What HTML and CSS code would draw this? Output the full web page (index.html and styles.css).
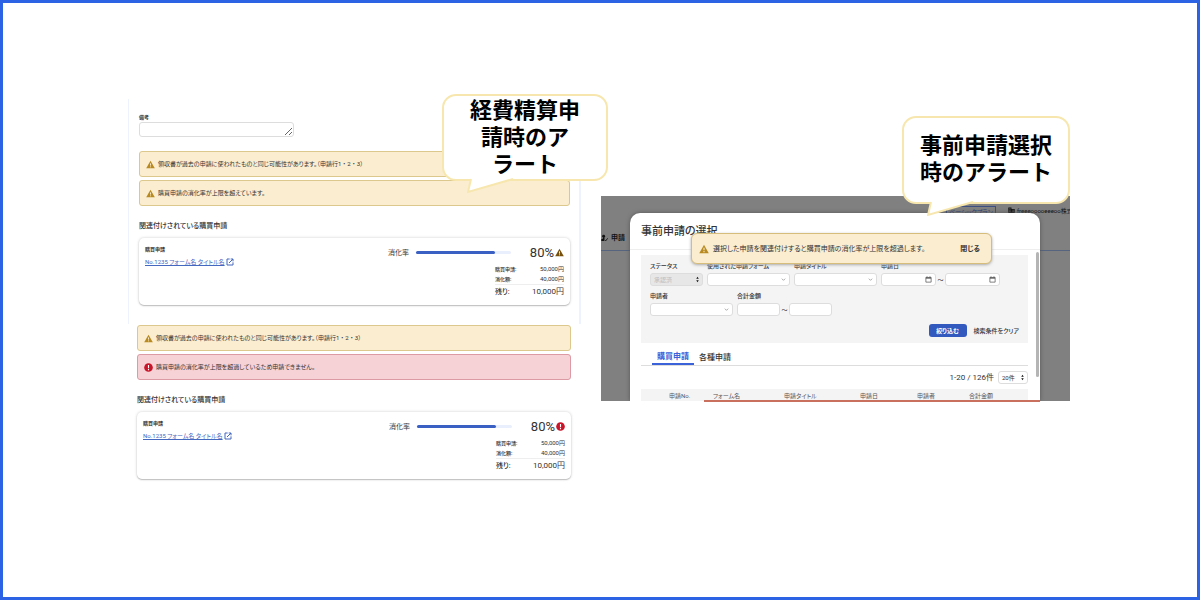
FILE: index.html
```
<!DOCTYPE html>
<html lang="ja">
<head>
<meta charset="utf-8">
<title>購買申請の消化率アラート</title>
<link rel="stylesheet" href="styles.css">
</head>
<body>
<svg class="defs" aria-hidden="true">
  <symbol id="warn" viewBox="0 0 24 24"><path d="M12 2 0.500 22h23z" fill="currentColor"/><path d="M12 9v6M12 17v2.500" stroke="var(--mark)" stroke-width="2.500"/></symbol>
  <symbol id="error" viewBox="0 0 24 24"><circle cx="12" cy="12" r="11.500" fill="currentColor"/><path d="M12 5v9M12 16v3" stroke="#fff" stroke-width="3"/></symbol>
  <symbol id="open" viewBox="0 0 24 24"><path d="M11 3H3v18h18v-8M14 3h7v7M21 3 9 15" fill="none" stroke="currentColor" stroke-width="3"/></symbol>
  <symbol id="down" viewBox="0 0 24 24"><path d="m4 8 8 8 8-8" fill="none" stroke="currentColor" stroke-width="3"/></symbol>
  <symbol id="updown" viewBox="0 0 12 24"><path d="M6 1 11 9H1zM6 23 1 15h10z" fill="currentColor"/></symbol>
  <symbol id="calendar" viewBox="0 0 24 24"><path d="M3 5h18v16H3zM7 1v4M17 1v4" fill="none" stroke="currentColor" stroke-width="2.500"/><path d="M3 5h18v4H3z" fill="currentColor"/></symbol>
  <symbol id="stamp" viewBox="0 0 24 24"><circle cx="9" cy="6" r="5" fill="currentColor"/><path d="M7 9h5v5l-1 8H1v-6l6-2z" fill="currentColor"/><path d="m12 18 4 4 7-9" fill="none" stroke="currentColor" stroke-width="3"/></symbol>
  <symbol id="building" viewBox="0 0 24 24"><path d="M1 2h11v5h11v16H1z" fill="currentColor"/><path d="M4 6h5M4 11h5M4 16h5M15 11h5M15 16h5" stroke="#808080" stroke-width="2"/></symbol>
</svg>
<main class="board">
  <section class="expense">
    <div class="panel panel-framed">
      <label class="field-label" for="memo">備考</label>
      <textarea class="memo" id="memo"></textarea>
      <div class="alert"><svg class="icon"><use href="#warn"/></svg><p>領収書が過去の申請に使われたものと同じ可能性があります。<span class="rows">（申請行1・2・3）</span></p></div>
      <div class="alert"><svg class="icon"><use href="#warn"/></svg><p>購買申請の消化率が上限を超えています。</p></div>
      <h2 class="section-title">関連付けされている購買申請</h2>
      <article class="card">
        <div class="request"><h3>購買申請</h3><a href="#">No.1235 フォーム名 タイトル名<svg class="link-icon"><use href="#open"/></svg></a></div>
        <div class="usage">
          <div class="rate"><span>消化率</span><div class="bar"><div class="bar-fill" style="width:83%"></div></div><strong>80%</strong><svg class="icon dark"><use href="#warn"/></svg></div>
          <dl class="amounts"><div><dt>購買申請:</dt><dd>50,000円</dd></div><div><dt>消化額:</dt><dd>40,000円</dd></div><div class="rest"><dt>残り:</dt><dd>10,000円</dd></div></dl>
        </div>
      </article>
    </div>
    <div class="panel">
      <div class="alert"><svg class="icon"><use href="#warn"/></svg><p>領収書が過去の申請に使われたものと同じ可能性があります。<span class="rows">（申請行1・2・3）</span></p></div>
      <div class="alert alert-error"><svg class="icon"><use href="#error"/></svg><p>購買申請の消化率が上限を超過しているため申請できません。</p></div>
      <h2 class="section-title">関連付けされている購買申請</h2>
      <article class="card">
        <div class="request"><h3>購買申請</h3><a href="#">No.1235 フォーム名 タイトル名<svg class="link-icon"><use href="#open"/></svg></a></div>
        <div class="usage">
          <div class="rate"><span>消化率</span><div class="bar"><div class="bar-fill" style="width:83%"></div></div><strong>80%</strong><svg class="icon red"><use href="#error"/></svg></div>
          <dl class="amounts"><div><dt>購買申請:</dt><dd>50,000円</dd></div><div><dt>消化額:</dt><dd>40,000円</dd></div><div class="rest"><dt>残り:</dt><dd>10,000円</dd></div></dl>
        </div>
      </article>
    </div>
    <div class="callout callout-expense"><p>経費精算申<br>請時のア<br>ラート</p><svg class="tail" viewBox="0 0 48 16"><path d="M4 0 1 14 46 1V0z" fill="#fff"/><path d="M4 1 1 14 46 1" fill="none" stroke="#f7e7ae" stroke-width="2"/></svg></div>
  </section>

  <section class="advance">
    <div class="app">
      <header class="app-header">
        <div class="account"><span class="plan">ベーシックプラン</span><span class="company"><svg><use href="#building"/></svg>freeeooooeeeoo株式会社</span></div>
        <nav class="nav"><svg><use href="#stamp"/></svg>申請</nav>
      </header>
      <div class="modal" role="dialog" aria-labelledby="modal-title">
        <h1 id="modal-title">事前申請の選択</h1>
        <div class="modal-body">
          <form class="filters">
            <div class="filter-row">
              <div class="field w-status"><label for="status">ステータス</label><div class="control disabled"><select id="status" disabled><option>承認済</option></select><svg class="updown"><use href="#updown"/></svg></div></div>
              <div class="field w-select"><label for="form">使用された申請フォーム</label><div class="control"><select id="form"><option></option></select><svg><use href="#down"/></svg></div></div>
              <div class="field w-select"><label for="title">申請タイトル</label><div class="control"><select id="title"><option></option></select><svg><use href="#down"/></svg></div></div>
              <div class="field"><label for="from">申請日</label><div class="range"><div class="control w-date"><input id="from" type="text"><svg class="cal"><use href="#calendar"/></svg></div><span>～</span><div class="control w-date"><input type="text" aria-label="申請日（終了）"><svg class="cal"><use href="#calendar"/></svg></div></div></div>
            </div>
            <div class="filter-row">
              <div class="field w-select"><label for="person">申請者</label><div class="control"><select id="person"><option></option></select><svg><use href="#down"/></svg></div></div>
              <div class="field"><label for="sum">合計金額</label><div class="range"><div class="control w-sum"><input id="sum" type="text"></div><span>～</span><div class="control w-sum"><input type="text" aria-label="合計金額（上限）"></div></div></div>
            </div>
            <div class="actions"><button class="primary" type="button">絞り込む</button><button class="plain" type="button">検索条件をクリア</button></div>
          </form>
          <div class="tabs"><button class="tab tab-active" type="button">購買申請</button><button class="tab" type="button">各種申請</button></div>
          <div class="pager"><span>1-20 / 126件</span><div class="control w-page"><select aria-label="表示件数"><option>20件</option></select><svg class="updown"><use href="#updown"/></svg></div></div>
          <table class="results"><thead><tr><th class="col-no">申請No.</th><th class="col-form">フォーム名</th><th class="col-title">申請タイトル</th><th class="col-date">申請日</th><th class="col-person">申請者</th><th>合計金額</th></tr></thead></table>
        </div>
        <div class="scrollbar"></div>
        <div class="toast"><svg class="icon"><use href="#warn"/></svg><p>選択した申請を関連付けすると購買申請の消化率が上限を超過します。</p><button type="button">閉じる</button></div>
      </div>
    </div>
    <div class="underline"></div>
    <div class="callout callout-advance"><p>事前申請選択<br>時のアラート</p><svg class="tail" viewBox="0 0 48 16"><path d="M4 0 1 14 46 1V0z" fill="#fff"/><path d="M4 1 1 14 46 1" fill="none" stroke="#f7e7ae" stroke-width="2"/></svg></div>
  </section>
</main>
</body>
</html>
```

FILE: styles.css
```
* { box-sizing: border-box; }
body, h1, h2, h3, p, dl, dd { margin: 0; }
body {
  font: 6px/10px Roboto, "Noto Sans CJK JP", sans-serif;
  font-feature-settings: "palt";
  color: #333;
  background: #fff;
}
button, input, select, textarea { font: inherit; color: inherit; padding: 0; margin: 0; border: 0; background: none; }
.defs { position: absolute; width: 0; height: 0; }
.board {
  min-height: 100vh;
  border: 3px solid #2c62e4;
  padding: 96px 127px 40px 125px;
  display: grid;
  grid-template-columns: 453fr 469fr;
  gap: 20px;
  align-items: start;
}
.expense, .advance { position: relative; }
.advance { margin-top: 97px; }

/* Expense report alerts */
.panel { padding: 0 10px 0 9px; }
.panel-framed {
  padding: 13px 9px 19px 10px;
  border: solid #edf2fc;
  border-width: 0 2px 0 1px;
  margin-bottom: 1px;
}
.field-label { display: block; font-size: 5px; font-weight: 700; }
.memo { display: block; width: 155px; height: 15px; border: 1px solid #ddd; border-radius: 3px; margin-bottom: 14px; }
.icon { width: 9px; height: 9px; flex: none; color: #b98a21; --mark: #faedcf; }
.alert {
  display: flex;
  align-items: center;
  gap: 3px;
  height: 26px;
  padding: 0 6px;
  margin-bottom: 3px;
  border: 1px solid #dcc88c;
  border-radius: 3px;
  background: #faedd0;
}
.alert-error { background: #f6d2d7; border-color: #dc9aa4; }
.alert-error .icon, .icon.red { color: #c8152a; }
.rows { font-feature-settings: normal; }
.icon.dark { color: #76500c; --mark: #fff; }
.section-title { font-size: 7px; line-height: 10px; font-weight: 500; margin: 15px 0 7px; }
.card {
  display: flex;
  justify-content: space-between;
  min-height: 66px;
  padding: 6px;
  border-radius: 5px;
  background: #fff;
  box-shadow: 0 0 3px #ccc, 0 1px 1px #bbb;
}
.request h3 { font-size: 5px; line-height: 10px; font-weight: 700; margin-bottom: 3px; }
.request a { display: flex; align-items: center; gap: 1px; font-size: 6px; line-height: 10px; color: #4467bf; text-decoration: underline; }
.link-icon { width: 8px; height: 8px; }
.usage { width: 176px; }
.rate { display: flex; align-items: center; height: 17px; font-size: 7px; white-space: nowrap; }
.bar { width: 95px; flex: none; height: 3px; margin: 0 auto 0 7px; border-radius: 2px; background: #e9effc; }
.bar-fill { height: 3px; border-radius: 2px; background: #3b60c4; }
.rate strong { font-size: 13px; font-weight: 400; margin-right: 1px; }
.amounts { width: 69px; margin: 3px 0 0 auto; }
.amounts div { display: flex; justify-content: space-between; line-height: 10px; }
.amounts dt { font-size: 5px; font-weight: 500; }
.amounts .rest { border-top: 1px solid #eee; line-height: 14px; font-size: 8px; }
.amounts .rest dt { font-size: 7px; }

/* Speech bubbles */
.callout {
  position: absolute;
  display: grid;
  place-content: center;
  border: 2px solid #f7e7ae;
  border-radius: 14px;
  background: #fff;
  color: #000;
  font-size: 22px;
  line-height: 27px;
  font-weight: 700;
  text-align: center;
  font-feature-settings: normal;
}
.callout-expense { width: 166px; height: 87px; top: -5px; right: -27px; }
.callout-advance { width: 168px; height: 88px; top: -80px; right: 0; padding-bottom: 2px; }
.tail { position: absolute; top: 100%; left: 23px; width: 48px; height: 16px; margin-top: -1px; }

/* Advance request dialog */
.app { display: grid; background: #808080; overflow: hidden; height: 205px; }
.app-header, .modal { grid-area: 1 / 1; min-width: 0; }
.app-header { height: 55px; border-bottom: 1px solid #56647f; color: #111; }
.account { display: flex; gap: 12px; padding: 10px 0 0 345px; height: 37px; white-space: nowrap; }
.plan { height: 10px; width: 50px; flex: none; line-height: 9px; border: 1px solid #3c4f80; color: #24397a; text-align: center; }
.company svg { width: 7px; height: 7px; margin-right: 2px; vertical-align: -1px; }
.nav { display: flex; align-items: center; gap: 3px; font-size: 7px; font-weight: 700; }
.nav svg { width: 7px; height: 8px; }
.modal { position: relative; margin: 17px 30px 0 29px; border-radius: 10px 10px 0 0; background: #fff; box-shadow: 0 0 4px #555; }
.modal h1 { height: 37px; padding-left: 11px; font-size: 11px; line-height: 38px; font-weight: 500; border-bottom: 1px solid #eee; }
.modal-body { padding: 5px 12px 0 11px; }
.filters { padding: 6px 9px; background: #f5f4f5; }
.filter-row { display: flex; gap: 4px; margin-bottom: 5px; }
.field label { display: block; font-size: 6px; line-height: 10px; margin-bottom: 2px; font-weight: 500; }
.control { position: relative; height: 13px; border: 1px solid #ddd; border-radius: 3px; background: #fff; }
.control select, .control input { display: block; width: 100%; height: 11px; padding-left: 3px; appearance: none; }
.control svg { position: absolute; right: 3px; top: 3px; width: 5px; height: 5px; color: #777; pointer-events: none; }
.control .cal { width: 7px; height: 7px; top: 2px; color: #555; }
.control .updown { width: 3px; height: 7px; top: 2px; color: #111; }
.disabled { background: #e8e7e8; color: #aaa; }
.w-status { width: 53px; }
.w-select { width: 83px; }
.w-date { width: 55px; }
.w-sum { width: 43px; }
.w-page { width: 30px; font-size: 6px; }
.range { display: flex; align-items: center; }
.range span { width: 9px; text-align: center; font-feature-settings: normal; }
.actions { display: flex; justify-content: flex-end; gap: 7px; margin-top: 8px; }
.primary { width: 38px; height: 13px; border-radius: 3px; background: #3259bd; color: #fff; font-weight: 700; }
.plain { font-weight: 500; }
.tabs { display: flex; margin-top: 7px; padding-left: 11px; border-bottom: 1px solid #ddd; }
.tab { height: 15px; padding: 0 5px; font-size: 8px; font-weight: 500; }
.tab-active { color: #3b62d8; font-weight: 700; border-bottom: 2px solid #3b62d8; }
.pager { display: flex; align-items: center; justify-content: flex-end; gap: 4px; margin: 5px 0; font-size: 8px; }
.results { width: 100%; border-collapse: collapse; table-layout: fixed; background: #f5f4f5; }
.results th { padding: 2px 0 0; line-height: 10px; text-align: left; font-weight: 400; white-space: nowrap; color: #555; }
.results .col-no { width: 72px; padding-left: 28px; }
.col-form { width: 71px; }
.col-title { width: 76px; }
.col-date { width: 57px; }
.col-person { width: 52px; }
.scrollbar { position: absolute; right: 1px; top: 39px; width: 3px; height: 125px; border-radius: 2px; background: #b5b5b5; }
.toast {
  position: absolute;
  top: 20px;
  left: 61px;
  right: 48px;
  height: 31px;
  display: flex;
  align-items: center;
  gap: 4px;
  padding: 0 11px 0 7px;
  border: 1px solid #d6bd7c;
  border-radius: 6px;
  background: #faedd0;
  box-shadow: 0 1px 3px #aaa;
  font-size: 7px;
}
.toast .icon { width: 10px; height: 10px; }
.toast button { margin-left: auto; font-weight: 700; }
.underline { position: relative; height: 2px; background: #c9705f; margin: -1px 30px 0 103px; }
```
